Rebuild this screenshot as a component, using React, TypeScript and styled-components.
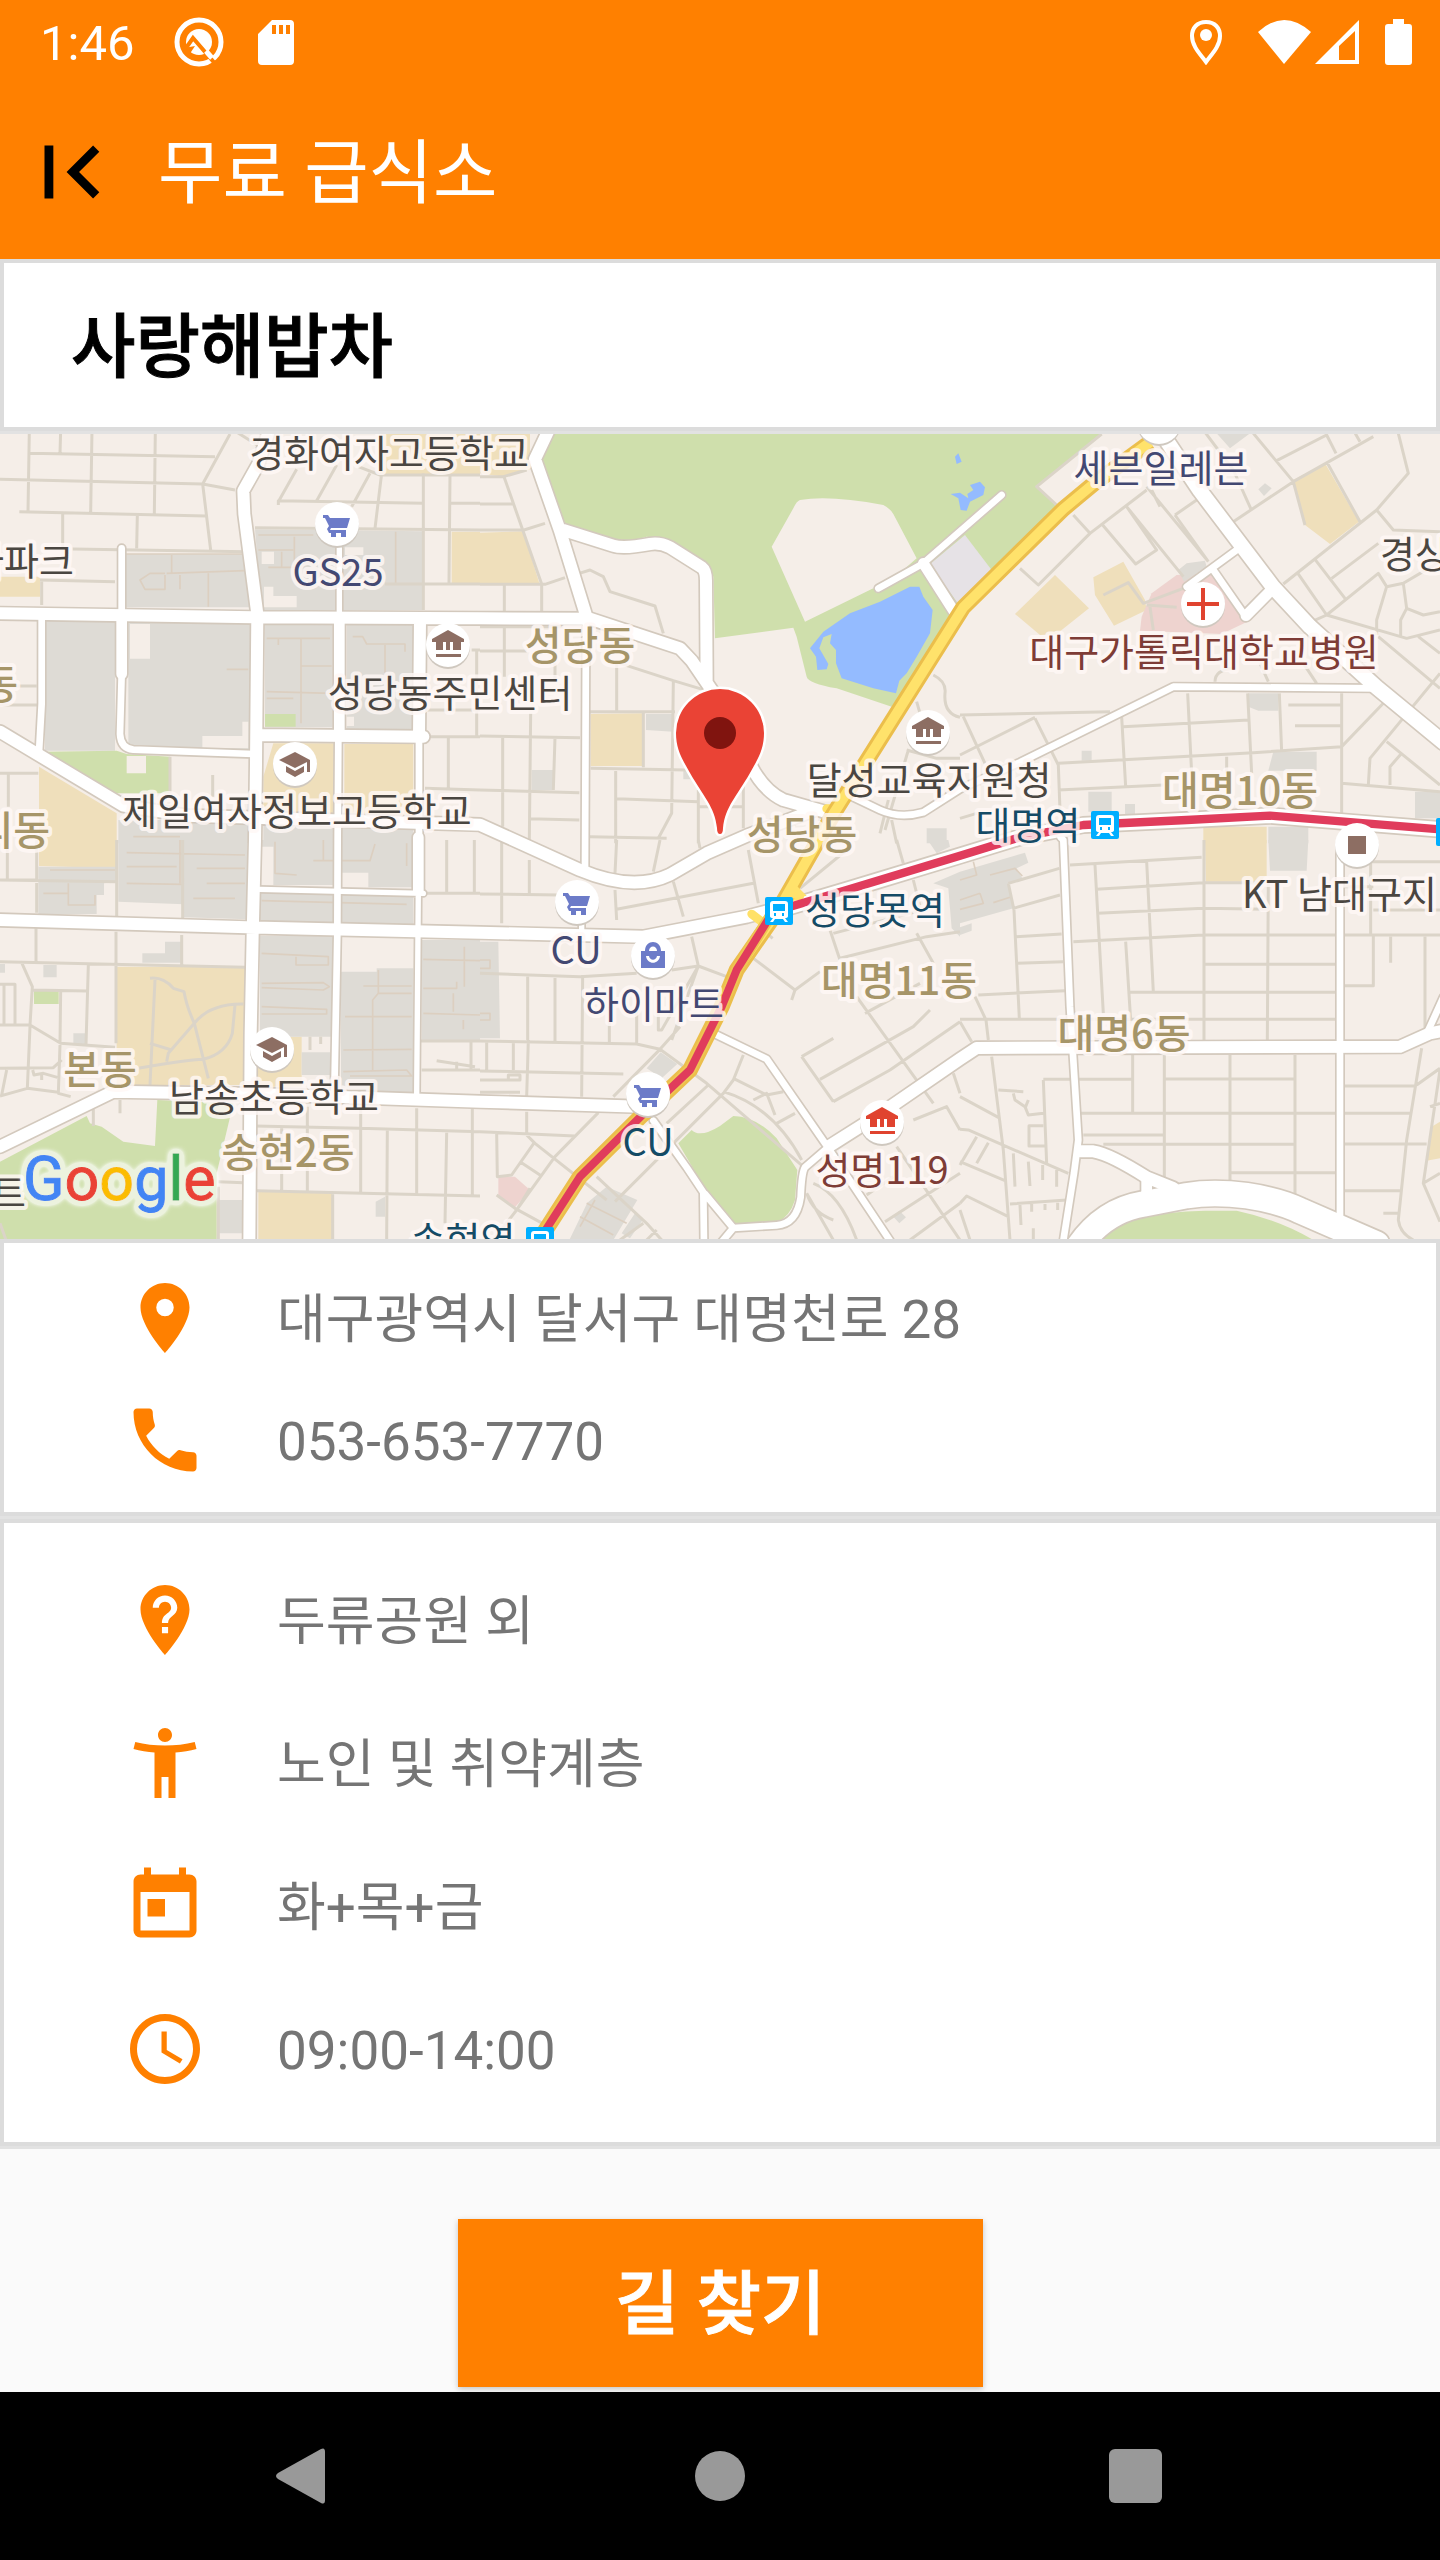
import React from "react";
import styled, { createGlobalStyle } from "styled-components";
import {
  MdAccessibilityNew,
  MdAccessTime,
  MdFirstPage,
  MdNotListedLocation,
  MdPhone,
  MdPlace,
  MdToday,
} from "react-icons/md";

const ORANGE = "#ff8000";
const SANS = 'Roboto, "Noto Sans CJK KR", sans-serif';
const MAP_SANS = '"Noto Sans CJK KR", sans-serif';

const GlobalStyle = createGlobalStyle`
  *, *::before, *::after { box-sizing: border-box; }
  body { margin: 0; background: #fafafa; font-family: ${SANS}; }
  h1, h2, ul, address { margin: 0; padding: 0; font-style: normal; list-style: none; }
`;

/* ---------- page frame ---------- */

const Page = styled.div`
  display: flex;
  flex-direction: column;
  min-height: 100vh;
`;

const StatusBar = styled.div`
  display: flex;
  align-items: center;
  justify-content: space-between;
  height: 84px;
  padding: 0 28px 0 40px;
  background: ${ORANGE};
  color: #fff;
  svg { display: block; }
`;

const StatusGroup = styled.div<{ $gap: number }>`
  display: flex;
  align-items: center;
  gap: ${(p) => p.$gap}px;
`;

const Clock = styled.time`
  padding-top: 4px;
  font-size: 49px;
  line-height: 60px;
  margin-right: 6px;
`;

const Toolbar = styled.header`
  display: flex;
  align-items: center;
  gap: 34px;
  height: 175px;
  padding: 0 18px;
  background: ${ORANGE};
`;

const BackButton = styled.button`
  display: flex;
  padding: 0;
  border: 0;
  background: none;
  color: #000;
  cursor: pointer;
`;

const ToolbarTitle = styled.h1`
  padding-top: 4px;
  color: #fff;
  font-size: 70px;
  font-weight: 400;
  line-height: 84px;
`;

const Card = styled.section<{ $pad: string; $gapBelow?: boolean }>`
  padding: ${(p) => p.$pad};
  border: 4px solid #dcdcdc;
  background: #fff;
  box-shadow: ${(p) => (p.$gapBelow ? "0 3px 0 #e2e2e2" : "none")};
  margin-bottom: ${(p) => (p.$gapBelow ? "3px" : "0")};
`;

const PlaceName = styled.h2`
  font-size: 70px;
  font-weight: 500;
  -webkit-text-stroke: 1px currentColor;
  line-height: 84px;
  color: #000;
`;

const InfoList = styled.ul<{ $row: number }>`
  display: grid;
  grid-auto-rows: ${(p) => p.$row}px;
`;

const InfoRow = styled.li`
  display: flex;
  align-items: center;
  gap: 70px;
  color: #757575;
  font-size: 53px;
  line-height: 64px;
  svg { flex: none; color: ${ORANGE}; }
  svg + * { padding-top: 4px; }
`;

const PhoneLink = styled.a`
  color: inherit;
  text-decoration: none;
`;

const Actions = styled.div`
  flex: 1;
  display: flex;
  justify-content: center;
  align-items: flex-start;
  padding: 70px 0 5px;
  overflow: hidden;
`;

const RouteButton = styled.button`
  width: 525px;
  height: 168px;
  padding: 4px 0 0;
  border: 0;
  background: ${ORANGE};
  color: #fff;
  font-family: ${SANS};
  font-size: 70px;
  font-weight: 500;
  -webkit-text-stroke: 1px currentColor;
  line-height: 84px;
  box-shadow: 0 2px 6px rgba(0, 0, 0, 0.22);
  cursor: pointer;
`;

const NavBar = styled.nav`
  display: flex;
  justify-content: center;
  gap: 250px;
  height: 168px;
  background: #000;
`;

const NavButton = styled.button`
  display: flex;
  align-items: center;
  justify-content: center;
  width: 168px;
  height: 168px;
  padding: 0;
  border: 0;
  background: none;
  cursor: pointer;
`;

/* ---------- map ---------- */

const MapFrame = styled.section`
  height: 805px;
  overflow: hidden;
  background: #f5eee8;
  svg { display: block; width: 100%; height: 100%; }
`;

const MapText = styled.text<{ $district?: boolean }>`
  font-family: ${MAP_SANS};
  font-size: ${(p) => (p.$district ? 40 : 38)}px;
  font-weight: ${(p) => (p.$district ? 500 : 400)};
  stroke: rgba(255, 248, 246, 0.82);
  stroke-width: 8px;
  stroke-linejoin: round;
  paint-order: stroke;
`;

const LogoText = styled.text`
  font-family: Roboto, sans-serif;
  font-size: 61px;
  font-weight: 400;
`;

const GRAY = "#dedbd5";
const SAND = "#efdfbb";
const GREEN = "#cfdfac";
const LAND = "#f5eee8";
const PINK = "#eed3cf";

type Tile = { x: number; y: number; areas: [string, string][]; streets: string; lanes?: string };

/* Six tiles, each 1440 units wide; three units make one pixel. */
const tiles: Tile[] = [
  {
    x: 0, y: -12,
    areas: [
      [GRAY, "M375 372 735 372 750 532 375 532ZM135 572H345V962H135ZM385 578H755V962L385 945ZM765 298 1270 304V540L785 542ZM795 582H998V892H795ZM1040 582H1240V900H1040ZM355 1170H745V1240H355ZM790 1185H1000V1240H790ZM1025 1190H1240V1240H1025Z"],
      [SAND, "M0 440H120V500H0ZM1355 305H1440V460H1355ZM1145 0H1440V135H1140ZM820 940H1003V1160H790V1040ZM1033 942H1240V1165H1033ZM117 1010 350 1150V1240H117Z"],
      [GREEN, "M130 965 350 962 380 972 510 980V1090H350ZM795 852H887V890H795Z"],
      [LAND, "M390 582H450V686H390ZM380 978H438V1030H380ZM607 918H727V875H745V955H607ZM785 365H822V402H785ZM792 470H820V498H890V532H792ZM1035 352H1090V375H1035ZM1035 860H1062V888H1035Z"],
    ],
    streets:
      "M88 0 84 245M182 0 180 70M276 0 272 248M466 0 463 252M88 70 645 80M0 148 608 162 705 180M690 12 608 162 632 360M58 245 618 258M188 250V355M412 255 410 355M218 357 740 365M120 450 345 455M125 455V525M700 0 780 50M765 293 1440 300M835 225V212L1270 220M890 118 835 215M1010 105 950 212M1110 130 1055 230M1145 130 1125 295M1075 110 1140 135 1440 135M1270 130V540M1350 135 1347 460M1350 220H1440M1155 462H1440M0 768H110M0 825H115M510 980V1090M638 1035V1100M1275 920H1440M1345 925V1075M1275 1075 1440 1080M1415 660H1440M1430 660V920M1275 840H1440M0 1030H115M25 1030V1130",
    lanes:
      "M375 372H735M515 375V430M500 430 735 422M625 430V530M495 430H450L420 450 435 478H495V435M540 435V478M775 315H940M883 320V412H805M845 365V412M775 360H880M1187 305V460M800 625H990M835 625V645M903 625V880M800 785 995 790M800 805H880M905 708H995M680 718H745M1058 620H1088L1100 642H1215V665M1155 645V735M400 1220H540",
  },
  {
    x: 1440, y: -12,
    areas: [
      [SAND, "M0 0H150V118L70 140 0 130ZM0 308 130 304 178 460H0ZM332 852 490 850V1008H332Z"],
      [GREEN, "M205 0 180 80 240 290 410 345 500 320 560 330 685 405 700 440 705 625 940 593 950 620 980 740Q985 760 1070 775L1235 830 1540 420 1730 230 1670 170 1880 0Z"],
      [LAND, "M960 210Q1050 195 1210 225 1230 235 1240 252L1310 385 1190 490 1180 475 975 575 875 350 940 235Q950 213 960 210Z"],
      ["#e6e2e6", "M1350 402 1455 315 1535 420 1435 522Z"],
      ["#94bbff", "M1290 470 1318 470 1330 500 1358 540 1350 610 1310 680 1280 730 1258 752 1248 790 1180 775 1085 745 1068 700 1068 660 1050 640 1055 612 1030 622 1018 655 1045 702 1040 718 1012 720 1008 680 990 655 1030 605 1110 550 1200 515ZM1425 80 1435 70 1445 95 1430 102ZM1412 192 1440 188 1465 205 1462 192 1480 180 1470 165 1500 155 1515 172 1510 195 1470 215 1460 242 1442 240 1435 205Z"],
      [GRAY, "M498 852H580V905L498 900ZM155 1020H220V1080H155ZM610 1020H650V1048H610ZM1340 1195H1400V1240H1340Z"],
    ],
    streets:
      "M0 140H72L185 462M140 120 70 140M0 222H98M0 300H132L195 280M0 463H195L255 443M73 463V545M185 463V545M298 430 330 420 370 440 390 485 525 528 550 610M0 590H250M73 590V740M0 663H140M225 700V755M410 700V845M420 700 580 752 690 785M580 755 575 1150 535 1225M330 845H585M0 918 300 923M68 923V1190M225 923 220 1080M152 850 148 1230M0 1080 298 1088M148 1166 298 1170M490 1012V850M332 1015 620 1020M407 1018V1240M410 1106 655 1115M330 1220 560 1225M655 1080V1240M790 1060V1195M655 1130H790M1310 815 1320 850M1360 735Q1400 755 1395 790 1390 850 1440 862M1280 960 1370 985 1440 985M1285 960 1215 1200M1225 1110 1200 1210M1235 1170 1250 1240",
  },
  {
    x: 2880, y: -12,
    areas: [
      [SAND, "M1000 150 1095 100 1197 275 1110 342 1035 285ZM165 552 285 435 387 535 290 612 240 615ZM400 442 490 395 555 510 560 540 462 587 405 495ZM730 1190H920V1240H730Z"],
      [PINK, "M540 602 545 560 575 490 650 435 760 430 868 572 785 612Z"],
      [GRAY, "M770 10H870L810 55ZM895 178 915 160 935 175 912 198ZM655 420 680 400 735 392 740 410 672 455ZM865 790H955V842H895L865 830ZM940 965H1070V1022H925ZM385 1085H455V1145H385ZM365 962H395V992H365ZM495 1122H525V1152H495ZM1365 1085H1440V1165H1365ZM925 1190H1045V1240H925Z"],
    ],
    streets:
      "M425 12 230 170 290 225M340 255 390 310 235 465 180 415M390 310 560 180M500 230 590 360 527 402 428 285M560 170 745 395M600 230 575 180M645 255 710 210M500 230 670 440M730 0 820 120 872 235M645 255 745 395M880 10 1000 155 1035 285M820 275 1000 155 1240 20M950 92 1100 15 1128 70M1180 0 1200 35M1100 95 1200 275M1315 10 1345 130 1250 240 1300 300 1440 305M1250 240 970 462M1065 388 1155 505M1115 445 1255 340M1010 425 1100 555 1055 575M1100 555 1255 430 1280 470 1250 570 1250 615M1280 470 1330 460 1440 395M1330 460 1340 535 1322 570V620M1340 535 1390 555 1440 545M1100 555 1340 625 1440 600M1375 620 1440 670M1255 620 1440 775M1440 730 1230 985 1225 1065M1270 820 1145 950M1280 935 1440 1065M1325 970 1290 1010V1065M0 855 450 845M10 860 75 1000M225 865 295 1005 300 1140M0 975 225 862M485 860 497 1070M490 890 865 870M683 790 695 1030M863 790 875 1030M958 790 965 965M295 1000 880 968 1145 950M1145 790V1150M985 825H1145M1005 887H1145M295 1080 610 1065M1145 1060 1440 1085M0 1165 50 1150M430 495 505 458 550 520 670 475M560 525 650 532M570 530 580 600M765 755Q765 720 820 715M900 700 925 755M1030 700 1070 760M800 980V1030",
  },
  {
    x: 0, y: 1218,
    areas: [
      [SAND, "M117 0H348V85L117 78ZM350 380H735V735H350ZM770 590H905V740H770ZM775 1055H997V1200H775Z"],
      [GRAY, "M355 0H742V238L552 232V193L355 185ZM780 0H1000V135H820V20H780ZM1023 0H1237V142H1105V98H1023ZM780 158 1240 170V252L780 245ZM115 80H348V125L312 130V165H290V222H115ZM780 288H1000V590H780ZM1023 395H1130V385H1240V762L1023 745ZM1265 300H1440V603H1265ZM905 637H990V705H905ZM427 340H495V305H543V368H427ZM130 375H170V412H130ZM0 372H15V398H0ZM220 580H260V612H220ZM657 1080H727V1180H657ZM1127 1085 1155 1070V1130H1127Z"],
      [GREEN, "M102 452H176V492H102ZM0 965 260 828 270 850 305 860 370 905 465 918 472 780 700 790 650 1000V1200H0Z"],
    ],
    streets:
      "M0 120H110M22 0V118M350 0V230M548 0V235M110 0V218M0 120 350 125M108 265V365M348 275V610M545 285V378M0 365 735 382M65 368 97 440 90 555 182 610 345 622M97 450 262 453M0 433H45V553M12 435V553M0 555H90M182 453 180 610M265 375 258 615M90 560 82 745M0 685 160 683 185 660M0 768 82 745 175 757M180 615 175 760 212 770M98 690 102 705 130 700 172 712M125 720V700M20 690 5 765M360 780V820M280 790V858M765 858 1080 865 1440 875M845 860V1050M922 800V1055M1082 800V1060M1250 805V1068M1417 805V1068M1162 870 1160 1200M1340 878 1335 1150M655 1025 730 1028M770 1052 1440 1068M998 1060V1200M655 1040V1200M1340 0V155M1423 0V155M1270 160H1440M1262 603H1440M1265 690H1440M1413 605V690M1310 662 1425 680M1370 665V688M930 590V630M962 590V612M415 685Q560 660 610 658 680 640 697 580L705 495M450 415Q490 410 520 445L552 455Q560 500 583 550L625 715M730 492Q630 490 583 550L505 640 500 665M465 420 450 735M450 610 515 630M0 1150 18 1200",
    lanes:
      "M380 38 735 45M540 0V130M380 80H530M380 130 550 133M590 85H735M620 130H735M580 175H705M150 90H345M205 130V195H285V165M130 160H205M825 5V100L890 105M970 0V60M940 62H1110L1125 12M1220 10V78M785 182 1220 193M1005 165V245M785 340 985 350V375H888V350M785 430 970 428 988 440 970 450 785 443M785 500 980 508V522H785M1035 530H1235M1135 390V460L1118 480V690M1135 460H1235M1090 438H1235M1030 630 1235 628M1030 695 1220 690 1235 708H1050M1270 358 1440 362M1393 320V440M1270 445H1370V425M1270 520 1440 525M1390 540V568M1360 460V515",
  },
  {
    x: 1440, y: 1218,
    areas: [
      [GRAY, "M0 305H55L60 595H0ZM500 685 542 637 592 672 545 715ZM380 1040 472 1080 400 1200H268L322 1088ZM425 1180 465 1120 488 1140 450 1195ZM1240 1130 1258 1112 1278 1132 1258 1150ZM1343 0H1405L1410 20 1370 40ZM1360 130 1440 95V290L1415 265 1405 145Z"],
      [GREEN, "M595 910 635 870Q660 895 720 858L760 828Q830 830 890 895L952 990 945 1080Q930 1130 890 1148L770 1155 665 1030Z"],
      [PINK, "M55 1010H105L150 1050 105 1102 55 1070Z"],
    ],
    streets:
      "M65 0V250M148 60V162M0 162 240 165M410 0 405 100M405 150 410 240M410 208 820 130M580 125 610 230M540 0 520 95M655 0 660 25M805 30 835 190M635 290 655 378 545 570H535V500M655 378 575 390M655 378 740 410M655 378 575 600M0 400 300 410 470 400M143 405V600M225 405V605M308 405 305 770M388 500V610M470 500V610M0 603 470 612 540 628 400 770M540 628 600 560M0 693 430 702M145 600 140 770M0 720H120V705H85V720M20 605V690M100 605V690M0 757H120M540 628 680 730 970 980M355 818 225 950 110 1110 40 1200M0 875 285 888M140 815V885M140 885 165 910 380 1080M165 905 95 1005 52 1010 50 880M120 965 180 1005M50 1065 105 1105 215 1165M150 1045 110 1110M685 735 560 850M790 645 760 720 730 760 405 1085M760 715 860 765 910 755M820 780 860 760 885 825M730 755Q880 800 965 960M890 850 945 820M820 355 945 450 935 480M945 450 1020 395M1250 0 1270 70M960 145 1100 30M1050 270 1080 360M1060 280 1310 215M1080 355 1340 290 1440 275M1300 120 1320 200M1310 280 1360 370M1130 470 1360 790M965 650 1060 595M965 650 1060 785M1020 718 1300 560 1350 510M1060 785 1230 690 1440 545M1155 520 1320 430M1300 840 1400 800 1440 870M1250 920 1440 1200M1160 1065 1240 1010M1215 1145 1440 1000M1290 1200 1440 1090M980 1060 1060 1200M1000 1030Q1080 1060 1130 1200M980 1060Q1000 1120 1060 1140M350 1010 500 1150 545 1200M490 1150 420 1200M1420 700 1440 760M860 280 878 295M530 1170 500 1200",
    lanes: "M0 360H30V385H0M0 520H30V540H0M320 1090 440 1150M300 1130 400 1185M345 1080 300 1160",
  },
  {
    x: 2880, y: 1218,
    areas: [
      [SAND, "M735 0H920V125H738ZM1415 860 1440 845V955L1400 962Z"],
      [GRAY, "M925 0H1045L1040 92H930ZM0 95 195 38 205 68 170 85 187 115 145 132 160 205 0 250ZM0 262 35 250V272L0 285Z"],
      [GREEN, "M380 1200Q500 1115 735 1112L830 1112Q960 1140 1060 1200Z"],
    ],
    streets:
      "M330 75 725 52M405 75 430 520M145 130 298 85M160 205 300 165M145 130 162 210 178 535M168 290 305 282M172 370 310 365M55 465 315 452M410 148 730 128H925M560 65 580 455M413 220 730 205 925 208M340 305 570 293 730 285H1440M497 305 512 540M732 0V600M925 125 922 600M735 373H1128M508 457H1128M0 538H1128M45 470 78 540 85 600M0 545 35 605M1232 60V285M1155 65H1440M1155 140H1240M1240 210H1440M1240 285V437H1155M1292 290V368M1395 290V570M95 650 130 930 150 1200M250 718H515M518 645V820M613 645V1020M810 645V1020M1005 645V1070M615 717H1005M360 820H1350M370 885H610M430 913H1005M810 998H1130M250 720 260 970M115 750 190 755M160 760 165 780 195 800 205 825 250 820M205 780 195 805M250 857H207V918H255M0 770 115 832M0 868 25 870 325 1000M50 890 0 975M85 908 50 970M0 965 135 1022M160 940 165 1040M205 965 210 1038M248 975V1020M290 990V1040M150 1092 320 1080M180 1095 183 1155M215 1092V1115M255 1092V1110M293 1088V1110M220 1165V1200M0 1110 30 1200M0 1090 20 1068 145 1130M1155 738H1365M1385 625 1340 900 1315 1140Q1320 1180 1360 1200M1370 735 1440 685M1410 800 1440 790M1440 690 1390 1030 1440 1145M1390 1030 1440 1000M1350 820H1155M1155 912H1400M1155 1052H1320M1270 1120H1315",
    lanes: "M40 65 50 105 0 120M90 105 165 85 187 108M100 188 150 172M60 160 70 190 0 208M60 160 0 180",
  },
];

const roads: { w: number; d: string }[] = [
  { w: 16, d: "M1018 343V540M780 1366 1270 1378M1255 1370 1250 1988M1745 1440V1490" },
  { w: 20, d: "M365 343V540M365 720 360 900Q362 943 400 947L760 960M125 558 125 810 117 955M1015 918 1013 1218 1012 1500 1003 1975M1257 918V1218M1758 560 1755 1308M2635 463 2770 388 3005 183M4130 763 3520 758 3060 985 2880 1065 2770 1135Q2700 1155 2640 1128L2560 1090M3710 348 3560 458M3640 408 3735 545M3182 1210 3190 1218 3210 1718 3235 2118 3222 2218 3190 2420M4020 1260V2350M2140 1798 2300 1875 2480 2135 2670 2420M1960 2060 2060 2200 2110 2275 2112 2430M2490 2135 2415 2200Q2405 2215 2402 2290 2390 2370 2330 2374L2200 2382 2115 2280M2200 2382 2160 2430M4330 1690 4280 1800" },
  { w: 32, d: "M365 540V720M1018 555V905M2770 388 2862 532M3820 462 3738 545M3440 2230V2300M1255 1210 1255 1370" },
  { w: 36, d: "M0 538 760 550 1440 553 1770 554 2040 643 2075 680 2150 790 2250 990Q2290 1070 2350 1098L2470 1132M810 -20 775 90 730 170 733 240 772 540 768 990 765 1218 758 1500 752 1800 748 2430M1260 558 1257 905M775 903 1270 908M0 893 370 1115 560 1145 1440 1172 1740 1308Q1900 1375 2010 1322L2120 1258 2240 1205 2440 1130M0 1458 740 1480 1440 1496 1930 1508 2240 1448 2310 1430M0 2138 340 1973 760 1980 1440 2003 1920 2018M1650 -20 1605 75 1680 290 1760 550M1690 288 1840 335Q1870 345 1950 330 1980 325 2010 340L2105 400Q2118 410 2118 440L2120 745M4330 1790 4290 1798 4200 1838 2930 1842 2880 1875 2640 2040 2490 2135M3240 2152H3280Q3330 2160 3440 2230L3520 2262" },
  { w: 44, d: "M3480 -10 3600 170 3820 460 3930 578 4130 760 4330 925" },
  { w: 76, d: "M3235 2440Q3310 2330 3430 2310L3560 2285Q3640 2272 3740 2285 3840 2300 3900 2330L4130 2430" },
];

const HIGHWAY = "M3450 25 3280 150 3190 225 2890 520 2500 1140 2340 1420 2210 1608 2165 1718 2070 1908 1925 2045 1740 2228 1610 2430";
const METRO_EAST = "M2330 1430 2540 1368 2880 1265 3060 1210 3250 1173 3560 1158 3810 1145 4330 1187";
const METRO_SOUTH = "M2340 1400 2210 1608 2165 1718 2070 1908 1925 2045 1740 2228 1610 2430";

type Label = { t: string; x: number; y: number; c?: string; a?: "start" | "middle" | "end"; district?: boolean };
const DARK = "#4a4641";
const NAVY = "#434872";
const TEAL = "#154b66";
const MAROON = "#7e3c36";
const TAN = "#a69568";

const labels: Label[] = [
  { t: "경화여자고등학교", x: 389, y: 33 },
  { t: "GS25", x: 338, y: 152, c: NAVY },
  { t: "라파크", x: 74, y: 141, a: "end" },
  { t: "동", x: 18, y: 265, a: "end", district: true },
  { t: "본리동", x: 50, y: 411, a: "end", district: true },
  { t: "성당동주민센터", x: 450, y: 273 },
  { t: "제일여자정보고등학교", x: 297, y: 391 },
  { t: "성당동", x: 580, y: 226, district: true },
  { t: "달성교육지원청", x: 929, y: 360 },
  { t: "세븐일레븐", x: 1161, y: 48, c: NAVY },
  { t: "대구가톨릭대학교병원", x: 1204, y: 232, c: MAROON },
  { t: "경상", x: 1380, y: 134, a: "start" },
  { t: "대명역", x: 1028, y: 405, c: TEAL },
  { t: "대명10동", x: 1240, y: 371, district: true },
  { t: "성당동", x: 802, y: 415, district: true },
  { t: "성당못역", x: 875, y: 490, c: TEAL },
  { t: "KT 남대구지", x: 1242, y: 474, a: "start" },
  { t: "대명11동", x: 899, y: 561, district: true },
  { t: "CU", x: 576, y: 530, c: NAVY },
  { t: "하이마트", x: 654, y: 584, c: NAVY },
  { t: "대명6동", x: 1124, y: 614, district: true },
  { t: "CU", x: 648, y: 722, c: TEAL },
  { t: "성명119", x: 882, y: 750, c: MAROON },
  { t: "본동", x: 100, y: 650, district: true },
  { t: "남송초등학교", x: 274, y: 677 },
  { t: "송현2동", x: 288, y: 733, district: true },
  { t: "트", x: 26, y: 773, a: "end" },
  { t: "송현역", x: 463, y: 820, c: TEAL },
];

type Kind = "cart" | "civic" | "school" | "bag" | "cross" | "square" | "blank";
const glyphs: Record<Kind, React.ReactNode> = {
  cart: <path d="M-14-9h5l2 3H13L10 4H-6l-1 2H9v3H-8l-2-4 2-3-4-8h-2zM-6 9h5v4h-5zM4 9h5v4H4z" />,
  civic: <path d="M0-15-16-6v3h4V5h7V-3h3V5H2V-3h3V5h8V-3h3v-3zM-12 9h25v3h-25z" />,
  school: <path d="M0-12-16-4 0 4 12-2V8h3V-4zM-9 2v6l9 5 9-5V2L0 7z" />,
  bag: <path fillRule="evenodd" d="M-12-5h4c0-12 16-12 16 0h4V12h-24zM-4-5h8c0-6-8-6-8 0zM-7 0C-6 9 6 9 7 0H4C3 5-3 5-4 0z" />,
  cross: <path d="M-2-16h4v14h14v4H2v14h-4V2h-14v-4h14z" />,
  square: <path d="M-9-9H9V9H-9z" />,
  blank: null,
};
const pois: { k: Kind; x: number; y: number; c: string }[] = [
  { k: "cart", x: 337, y: 90, c: "#6c7bc8" },
  { k: "civic", x: 448, y: 211, c: "#8d6e63" },
  { k: "civic", x: 928, y: 298, c: "#8d6e63" },
  { k: "school", x: 295, y: 330, c: "#8d6e63" },
  { k: "school", x: 272, y: 615, c: "#8d6e63" },
  { k: "cart", x: 577, y: 468, c: "#6c7bc8" },
  { k: "bag", x: 653, y: 522, c: "#6c7bc8" },
  { k: "cart", x: 648, y: 660, c: "#6c7bc8" },
  { k: "civic", x: 882, y: 688, c: "#e0432f" },
  { k: "cross", x: 1203, y: 170, c: "#e0432f" },
  { k: "square", x: 1357, y: 411, c: "#8d6e63" },
  { k: "blank", x: 1159, y: -12, c: "#8d6e63" },
];

const stations = [[1105, 391], [779, 477], [540, 807], [1450, 398]];

const logoLetters: [string, string][] = [
  ["G", "#4285f4"], ["o", "#ea4335"], ["o", "#fbbc05"], ["g", "#4285f4"], ["l", "#34a853"], ["e", "#ea4335"],
];

function PlaceMap() {
  return (
    <MapFrame aria-label="지도">
      <svg viewBox="0 0 1440 805" preserveAspectRatio="xMidYMid slice">
        <defs>
          <filter id="logo-halo" x="-10%" y="-20%" width="120%" height="140%">
            <feMorphology in="SourceAlpha" operator="dilate" radius="1" result="solid" />
            <feGaussianBlur in="solid" stdDeviation="3" result="soft" />
            <feComponentTransfer in="soft" result="edge">
              <feFuncR type="linear" slope="0" intercept="1" />
              <feFuncG type="linear" slope="0" intercept="1" />
              <feFuncB type="linear" slope="0" intercept="1" />
              <feFuncA type="table" tableValues="0 0.6 0.6 0.6 0.6 0.6 0.6 0.6 0.6" />
            </feComponentTransfer>
            <feMerge>
              <feMergeNode in="edge" />
              <feMergeNode in="SourceGraphic" />
            </feMerge>
          </filter>
        </defs>
        <g transform="scale(0.33333)" fill="none" strokeLinejoin="round">
          {tiles.map((t) => (
            <g key={`${t.x},${t.y}`} transform={`translate(${t.x} ${t.y})`}>
              {t.areas.map(([fill, d]) => <path key={d} d={d} fill={fill} />)}
            </g>
          ))}
          {tiles.map((t) => (
            <g key={`${t.x},${t.y}`} transform={`translate(${t.x} ${t.y})`}>
              {t.lanes && <path d={t.lanes} stroke="#dccfc0" strokeWidth="5" />}
              <path d={t.streets} stroke="#dbd4c8" strokeWidth="9" />
            </g>
          ))}
          {roads.map((r) => <path key={r.w} d={r.d} stroke="#d3c9bd" strokeWidth={r.w + 10} strokeLinecap="round" />)}
          <path d={METRO_EAST} stroke="#d3c9bd" strokeWidth="54" />
          {roads.map((r) => <path key={r.w} d={r.d} stroke="#fff" strokeWidth={r.w} strokeLinecap="round" />)}
          <path d={METRO_EAST} stroke="#fff" strokeWidth="44" />
          <path d="M2480 1124H2520M2255 1440 2300 1475M2360 1390 2400 1385" stroke="#ffe168" strokeWidth="26" strokeLinecap="round" />
          <path d={HIGHWAY} stroke="#ebbe4c" strokeWidth="48" />
          <path d={HIGHWAY} stroke="#ffe26b" strokeWidth="30" />
          <path d="M2420 1270 2345 1400 2420 1385 2385 1350Z" fill="#ffe26b" />
          <path d={METRO_SOUTH} stroke="#efc553" strokeWidth="34" />
          <path d={METRO_SOUTH} stroke="#e03c5c" strokeWidth="24" />
          <path d={METRO_EAST} stroke="#e03c5c" strokeWidth="25" />
        </g>
        {labels.map((l) => (
          <MapText key={`${l.t}${l.x}`} x={l.x} y={l.y} textAnchor={l.a ?? "middle"} fill={l.district ? TAN : l.c ?? DARK} $district={l.district}>
            {l.t}
          </MapText>
        ))}
        {pois.map((p) => (
          <g key={`${p.x},${p.y}`} transform={`translate(${p.x} ${p.y})`} fill={p.c}>
            <circle cy="2" r="22" fill="#cfc8bf" />
            <circle r="22" fill="#fff" />
            {glyphs[p.k]}
          </g>
        ))}
        {stations.map(([x, y]) => (
          <g key={`${x},${y}`} transform={`translate(${x} ${y})`}>
            <rect x="-14" y="-14" width="28" height="28" rx="2" fill="#00aeff" />
            <path fill="#fff" fillRule="evenodd" d="M-6-10H6q3 0 3 3V5q0 2-3 2l3 4H6L4 8H-4l-2 3h-3l3-4q-3 0-3-2V-7q0-3 3-3zM-6-7V0H6v-7zM-5 2v3h2V2zM3 2v3h2V2z" />
          </g>
        ))}
        <path
          d="M720 400c-2 0-3-2-3-6C715 373 703 362 690 339 682 325 676 315 676 299A44 44 0 0 1 764 299C764 315 758 325 750 339 737 362 725 373 723 394c0 4-1 6-3 6z"
          fill="#ea4335" stroke="#fff" strokeWidth="5" paintOrder="stroke"
        />
        <circle cx="720" cy="299" r="16" fill="#80140f" />
        <LogoText x="23" y="766" filter="url(#logo-halo)">
          {logoLetters.map(([ch, fill], i) => <tspan key={i} fill={fill} stroke={fill} strokeWidth="1">{ch}</tspan>)}
        </LogoText>
      </svg>
    </MapFrame>
  );
}

/* ---------- screen ---------- */

export default function App() {
  return (
    <Page>
      <GlobalStyle />
      <StatusBar>
        <StatusGroup $gap={34}>
          <Clock>1:46</Clock>
          <svg width="50" height="50" viewBox="0 0 50 50">
            <circle cx="25" cy="25" r="22" fill="none" stroke="#fff" strokeWidth="5" />
            <circle cx="25" cy="25" r="13" fill="#fff" />
            <path d="M12 31 19 21 44 50" fill="none" stroke={ORANGE} strokeWidth="4" />
            <path d="M10 31 15 38 21 29" fill={ORANGE} />
            <path d="M32 34 38 41" stroke="#fff" strokeWidth="5" />
          </svg>
          <svg width="36" height="45" viewBox="0 0 36 45">
            <path fill="#fff" fillRule="evenodd" d="M14 0H32q4 0 4 4V41q0 4-4 4H4q-4 0-4-4V14zM14 5v9h4V5zM21 5v9h4V5zM28 5v9h4V5z" />
          </svg>
        </StatusGroup>
        <StatusGroup $gap={4}>
          <svg width="64" height="46" viewBox="0 0 64 46">
            <path d="M16 3C7 3 2 9 2 17 2 27 10 35 16 43 22 35 30 27 30 17 30 9 25 3 16 3z" fill="none" stroke="#fff" strokeWidth="4" />
            <circle cx="16" cy="16" r="6" fill="#fff" />
          </svg>
          <svg width="53" height="44" viewBox="0 0 53 44">
            <path d="M0 12Q26-12 53 12L26 44z" fill="#fff" />
          </svg>
          <svg width="66" height="44" viewBox="0 0 66 44">
            <path fill="#fff" fillRule="evenodd" d="M0 44 44 0V44zM24 40H40V11L24 26z" />
          </svg>
          <svg width="27" height="46" viewBox="0 0 27 46">
            <path d="M8 0H19V5H24q3 0 3 3V43q0 3-3 3H3q-3 0-3-3V8q0-3 3-3H8z" fill="#fff" />
          </svg>
        </StatusGroup>
      </StatusBar>

      <Toolbar>
        <BackButton type="button" aria-label="뒤로">
          <MdFirstPage size={106} />
        </BackButton>
        <ToolbarTitle>무료 급식소</ToolbarTitle>
      </Toolbar>

      <Card $pad="43px 67px 37px" $gapBelow>
        <PlaceName>사랑해밥차</PlaceName>
      </Card>

      <PlaceMap />

      <Card $pad="14px 119px 11px" $gapBelow>
        <InfoList $row={122}>
          <InfoRow><MdPlace size={84} /><address>대구광역시 달서구 대명천로 28</address></InfoRow>
          <InfoRow><MdPhone size={84} /><PhoneLink href="tel:053-653-7770">053-653-7770</PhoneLink></InfoRow>
        </InfoList>
      </Card>

      <Card $pad="25px 119px 22px" $gapBelow>
        <InfoList $row={143}>
          <InfoRow><MdNotListedLocation size={84} /><span>두류공원 외</span></InfoRow>
          <InfoRow><MdAccessibilityNew size={84} /><span>노인 및 취약계층</span></InfoRow>
          <InfoRow><MdToday size={84} /><span>화+목+금</span></InfoRow>
          <InfoRow><MdAccessTime size={84} /><span>09:00-14:00</span></InfoRow>
        </InfoList>
      </Card>

      <Actions>
        <RouteButton type="button">길 찾기</RouteButton>
      </Actions>

      <NavBar>
        <NavButton type="button" aria-label="뒤로 가기">
          <svg width="52" height="56" viewBox="0 0 52 56"><path d="M2 25 45 1q4-2 4 3V52q0 5-4 3L2 31q-4-3 0-6z" fill="#999" /></svg>
        </NavButton>
        <NavButton type="button" aria-label="홈">
          <svg width="50" height="50" viewBox="0 0 50 50"><circle cx="25" cy="25" r="25" fill="#999" /></svg>
        </NavButton>
        <NavButton type="button" aria-label="최근 앱">
          <svg width="58" height="54" viewBox="0 0 58 54"><rect width="53" height="54" rx="6" fill="#999" /></svg>
        </NavButton>
      </NavBar>
    </Page>
  );
}
